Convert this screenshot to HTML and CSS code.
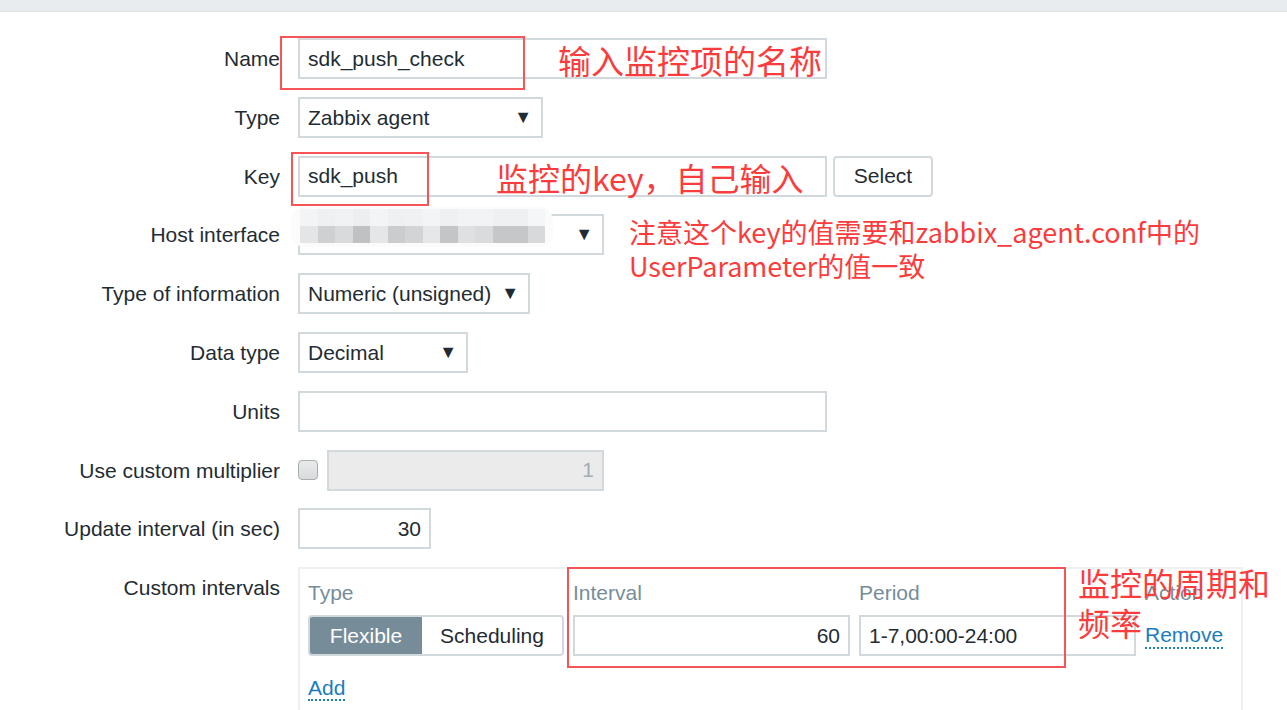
FILE: index.html
```html
<!DOCTYPE html>
<html lang="zh-CN">
<head>
    <meta charset="UTF-8">
    <title>Item</title>
    <link rel="stylesheet" href="styles.css">
</head>
<body>
    <div class="topbar"></div>

    <form class="item-form">
        <label class="lbl">Name</label>
        <div class="field"><input class="txt w-long" type="text" value="sdk_push_check"></div>

        <label class="lbl">Type</label>
        <div class="field"><div class="sel w-type">Zabbix agent<span class="arrow">▼</span></div></div>

        <label class="lbl">Key</label>
        <div class="field">
            <input class="txt w-long" type="text" value="sdk_push">
            <button type="button" class="btn">Select</button>
        </div>

        <label class="lbl">Host interface</label>
        <div class="field"><div class="sel w-host">&nbsp;<span class="arrow">▼</span></div></div>

        <label class="lbl">Type of information</label>
        <div class="field"><div class="sel w-info">Numeric (unsigned)<span class="arrow">▼</span></div></div>

        <label class="lbl">Data type</label>
        <div class="field"><div class="sel w-data">Decimal<span class="arrow">▼</span></div></div>

        <label class="lbl">Units</label>
        <div class="field"><input class="txt w-long" type="text" value=""></div>

        <label class="lbl">Use custom multiplier</label>
        <div class="field">
            <span class="check"></span>
            <input class="txt w-mult num disabled" type="text" value="1" disabled>
        </div>

        <label class="lbl">Update interval (in sec)</label>
        <div class="field"><input class="txt w-upd num" type="text" value="30"></div>

        <label class="lbl">Custom intervals</label>
        <div class="field">
            <div class="intervals">
                <div class="iv-row iv-head">
                    <span>Type</span>
                    <span>Interval</span>
                    <span>Period</span>
                    <span>Action</span>
                </div>
                <div class="iv-row">
                    <div class="seg">
                        <span class="seg-on">Flexible</span>
                        <span class="seg-off">Scheduling</span>
                    </div>
                    <input class="txt num" type="text" value="60">
                    <input class="txt" type="text" value="1-7,00:00-24:00">
                    <a class="link" href="#">Remove</a>
                </div>
                <div class="iv-add"><a class="link" href="#">Add</a></div>
            </div>
        </div>
    </form>

    <!-- blurred host interface -->
    <div class="blur">
        <div class="blur-top">
            <i style="background:#f3f4f5"></i><i style="background:#eef0f1"></i><i style="background:#f1f2f3"></i><i style="background:#eceef0"></i><i style="background:#f3f4f5"></i><i style="background:#eff0f1"></i><i style="background:#f0f1f2"></i><i style="background:#f3f4f5"></i><i style="background:#eef0f1"></i><i style="background:#f2f3f4"></i><i style="background:#f2f3f4"></i><i style="background:#eef0f1"></i><i style="background:#eff0f1"></i><i style="background:#f5f6f7"></i>
        </div>
        <div class="blur-bot">
            <i style="background:#e4e5e6"></i><i style="background:#cfd0d1"></i><i style="background:#d9dadb"></i><i style="background:#c0c1c2"></i><i style="background:#e4e6e8"></i><i style="background:#cbcccd"></i><i style="background:#d3d4d6"></i><i style="background:#e6e7e8"></i><i style="background:#c4c5c6"></i><i style="background:#dfe0e1"></i><i style="background:#dadbdc"></i><i style="background:#c6c7c8"></i><i style="background:#c6c7c8"></i><i style="background:#d8d9da"></i>
        </div>
    </div>

    <!-- annotations -->
    <div class="mark mark-name"></div>
    <div class="mark mark-key"></div>
    <div class="mark mark-iv"></div>
    <div class="note note-name">输入监控项的名称</div>
    <div class="note note-key">监控的key，自己输入</div>
    <div class="note note-conf">注意这个key的值需要和zabbix_agent.conf中的<br>UserParameter的值一致</div>
    <div class="note note-iv">监控的周期和<br>频率</div>
</body>
</html>
```

FILE: styles.css
```css
body {
    margin: 0;
    font-family: "Liberation Sans", Arial, sans-serif;
    font-size: 21px;
    color: #1f2c33;
    background: #fff;
    position: relative;
    height: 710px;
    overflow: hidden;
}
.topbar {
    height: 11px;
    background: #e8ecef;
    border-bottom: 1px solid #dde3e6;
}
.item-form {
    display: grid;
    grid-template-columns: 280px auto;
    column-gap: 18px;
    row-gap: 17.8px;
    padding-top: 26px;
}
.lbl {
    text-align: right;
    line-height: 41px;
    white-space: nowrap;
}
.field {
    display: flex;
    align-items: center;
    gap: 6px;
}
.txt {
    box-sizing: border-box;
    height: 41px;
    border: 2px solid #d2d9dd;
    padding: 0 8px;
    font-family: inherit;
    font-size: 21px;
    color: #1f2c33;
    background: #fff;
    outline: none;
}
.num {
    text-align: right;
}
.disabled {
    background: #ebebeb;
    color: #a3acb1;
}
.w-long { width: 529px; }
.w-mult { width: 277px; margin-left: 3px; }
.w-upd { width: 133px; }
.sel {
    box-sizing: border-box;
    height: 41px;
    border: 2px solid #d2d9dd;
    padding: 0 8px;
    line-height: 37px;
    position: relative;
    white-space: nowrap;
}
.arrow {
    position: absolute;
    right: 9px;
    top: 0;
    font-size: 18px;
    color: #1f2c33;
}
.w-type { width: 245px; }
.w-host { width: 306px; }
.w-info { width: 232px; }
.w-data { width: 170px; }
.btn {
    height: 41px;
    width: 100px;
    border: 2px solid #d2d9dd;
    border-radius: 4px;
    background: #fff;
    font-family: inherit;
    font-size: 21px;
    color: #1f2c33;
}
.check {
    width: 18px;
    height: 18px;
    border: 1px solid #a9aeb1;
    border-radius: 4px;
    background: linear-gradient(#e9eaeb, #d8dadb);
}
.intervals {
    box-sizing: border-box;
    width: 945px;
    height: 160px;
    border: 2px solid #eef1f2;
    padding: 9px 8px;
    align-self: flex-start;
}
.iv-row {
    display: grid;
    grid-template-columns: 256px 277px 277px auto;
    column-gap: 9px;
    align-items: center;
}
.iv-head {
    color: #768d99;
    height: 30px;
    margin-bottom: 7px;
}
.iv-row .txt {
    width: 100%;
}
.seg {
    display: flex;
    height: 41px;
    border: 2px solid #d2d9dd;
    border-radius: 4px;
    box-sizing: border-box;
    overflow: hidden;
}
.seg span {
    display: flex;
    align-items: center;
    justify-content: center;
}
.seg-on {
    width: 112px;
    background: #768d99;
    color: #fff;
}
.seg-off {
    flex: 1;
    background: #fff;
}
.link {
    color: #1b7dbd;
    text-decoration: none;
    border-bottom: 2px dotted #1b7dbd;
    justify-self: start;
}
.iv-add {
    margin-top: 20px;
}

/* blur over host interface */
.blur {
    position: absolute;
    left: 291px;
    top: 207px;
    width: 262px;
    height: 40px;
    background: #fbfbfb;
    border-radius: 14px;
    padding: 2px 0 0 9px;
    box-sizing: border-box;
}
.blur-top, .blur-bot {
    display: flex;
    height: 17px;
}
.blur i {
    width: 17.5px;
    display: block;
}

/* annotations */
.mark {
    position: absolute;
    border: 2px solid #f65456;
}
.mark-name { left: 280px; top: 36px; width: 241px; height: 50px; }
.mark-key { left: 291px; top: 152px; width: 134px; height: 50px; }
.mark-iv { left: 567px; top: 567px; width: 495px; height: 97px; }
.note {
    position: absolute;
    color: #fa3c3c;
    font-family: "Noto Sans CJK SC", sans-serif;
    white-space: nowrap;
}
.note-name { left: 558px; top: 40px; font-size: 33px; line-height: 40px; }
.note-key { left: 496px; top: 157px; font-size: 32px; line-height: 40px; }
.note-conf { left: 629px; top: 215px; font-size: 27px; line-height: 34px; }
.note-iv { left: 1078px; top: 562px; font-size: 32px; line-height: 40px; }
```
